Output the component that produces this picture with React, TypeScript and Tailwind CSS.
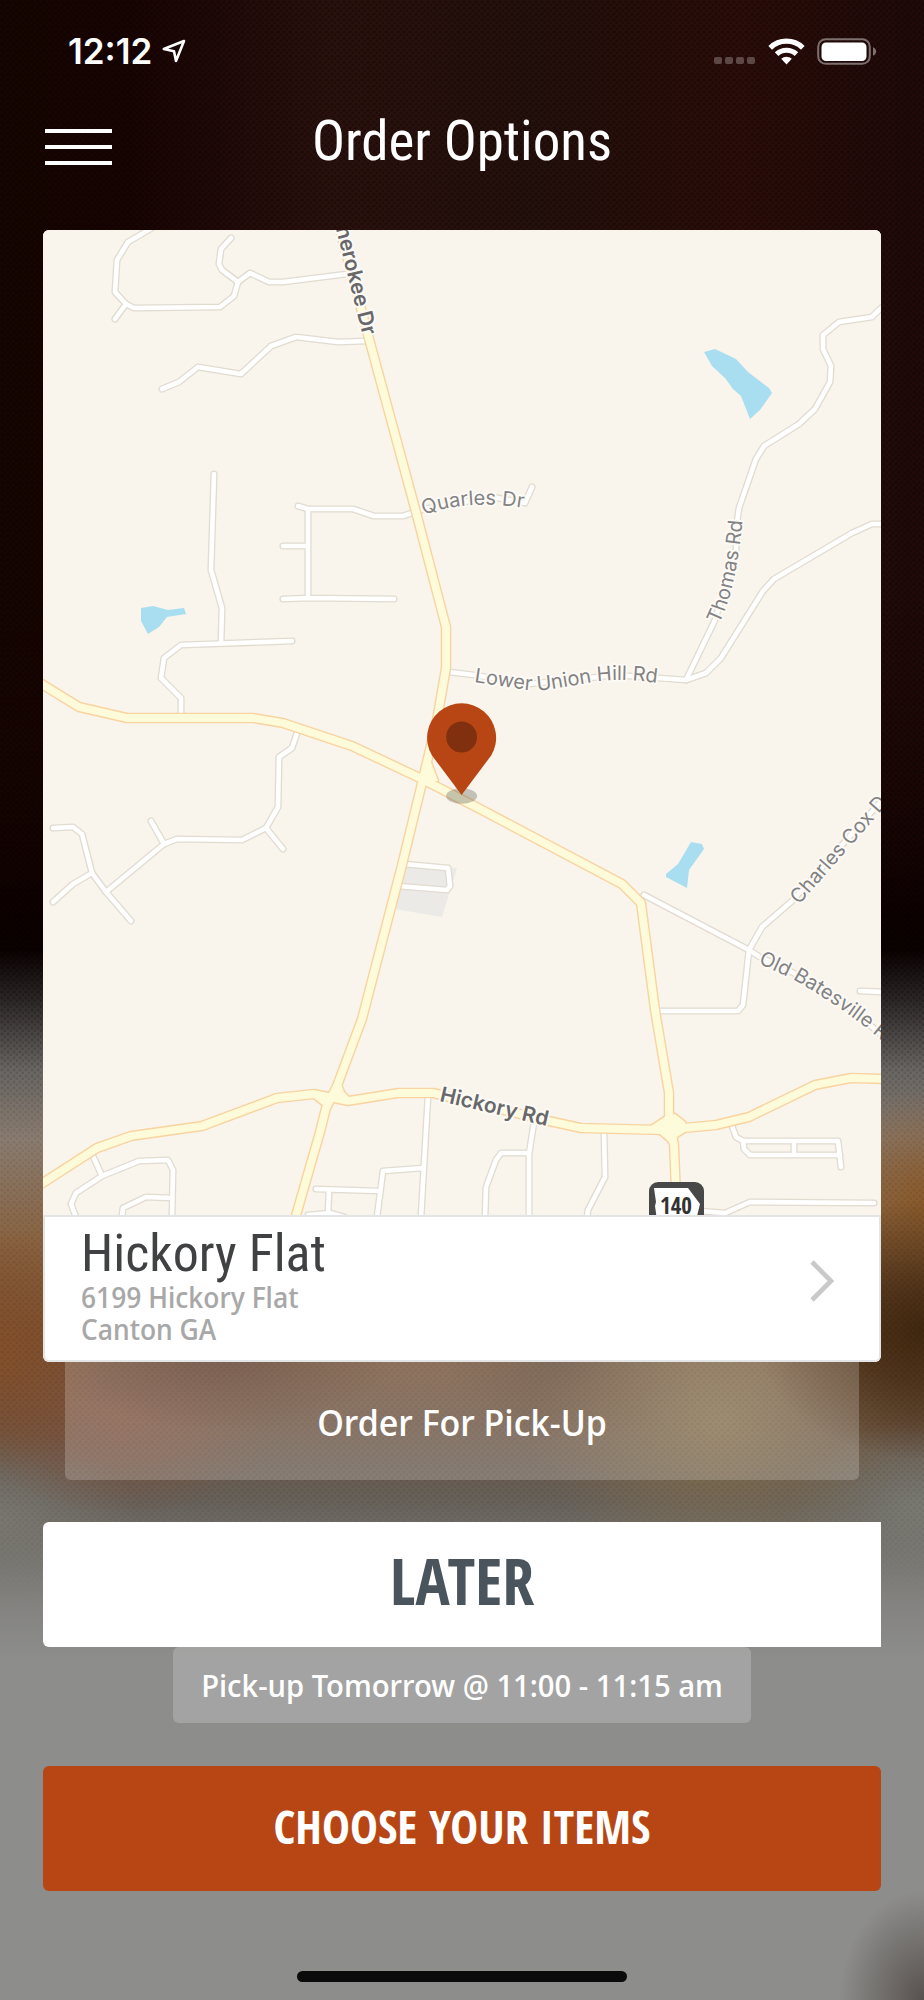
const TITLE_FONT = "font-['Roboto_Condensed','Noto_Sans',sans-serif]";
const LABEL_FONT = "font-['Noto_Sans_Display','Noto_Sans',sans-serif]";
const ACTION_FONT = "font-['Open_Sans_Condensed','Open_Sans',sans-serif]";

const STREETS = [
  'M152 228 128 242 117 260 115 292 126 304 134 308 220 307 234 296 238 282 250 273 269 282 283 282 347 274',
  'M126 304 115 319',
  'M231 238 221 249 219 264 222 270 238 282',
  'M162 389 179 382 198 367 241 374 271 346 296 337 338 342 367 341',
  'M298 506 308 509 353 509 374 516 403 516 424 509 492 497 525 503 532 487',
  'M308 509V598M283 546H308M283 599 308 598 394 599',
  'M214 474 211 570 222 608 221 643',
  'M292 641 181 645 164 658 161 678 181 698V718',
  'M881 308 872 317 839 322 823 335V349L831 366 830 382 815 409 799 424 764 446 756 459 739 508 737 522 736 550 715 620 686 680',
  'M449 672 474 675 529 684 589 678 615 675 686 680 706 673 721 658 763 591 774 579 852 533 872 524H884',
  'M297 733 292 748 279 757 278 807 266 828 242 840 177 839 164 844 106 892',
  'M266 828 283 849M151 821 164 844',
  'M53 828 73 827 82 834 92 873 106 892 131 921',
  'M92 873 73 884 53 902',
  'M404 864 448 868 450 886 447 890 398 886',
  'M92 1154 102 1176',
  'M76 1217 71 1204 76 1193 102 1176 139 1161 168 1160 173 1170 172 1217',
  'M122 1217 123 1208 146 1197 172 1198',
  'M428 1096 421 1217M423 1168 383 1171 377 1217',
  'M316 1189 379 1191M329 1190 328 1215M308 1215 330 1213 344 1217',
  'M644 895 749 950 760 957 800 976 840 1000 884 1037',
  'M884 798 792 901 762 927 749 950 743 1005 738 1011H658',
  'M860 991 884 992',
  'M534 1122 529 1154V1217M529 1153H501L496 1160 486 1187 485 1217',
  'M604 1130 605 1177 588 1210 587 1217',
  'M731 1123 736 1137 743 1141H838L841 1167M743 1141 744 1149 750 1155H840M794 1141V1155',
  'M700 1211 725 1213 750 1202 874 1203',
];

const HIGHWAYS = [
  'M339 226 368 335 416 512 446 627V668L437 720 427 762 422 783 402 865 362 1019 337 1086 326 1108 320 1132 295 1219',
  'M40 683 79 707 127 718H253L283 723 352 746 422 779 482 810 622 884 641 903 655 1010 669 1093V1127L674 1144 677 1219',
  'M38 1186 97 1148 131 1136 202 1126 277 1098 314 1094 348 1101 398 1093H433L549 1121 581 1128 662 1130 716 1125 749 1117 815 1085 851 1078 886 1079',
];

const JUNCTIONS =
  'M429 757 438 781 424 782ZM310 1095 324 1106 326 1116 334 1100ZM341 1084 344 1092 350 1098 334 1097ZM648 1128 666 1116 675 1114 685 1122 688 1130 677 1137 675 1150 667 1140 660 1134Z';

const PONDS = [
  'M141 608 153 606 168 610 184 608 186 614 167 617 159 627 148 634 141 621Z',
  'M704 352 715 349 736 359 748 372 769 388 772 393 760 410 750 419 741 396 733 389 725 378 712 366Z',
  'M691 842 702 844 704 849 689 870 687 888 666 877V874L678 864Z',
];

const LABELS = [
  { id: 'quarles', text: 'Quarles Dr', d: 'M424 515Q470 498 530 509', major: false },
  { id: 'union', text: 'Lower Union Hill Rd', d: 'M474 682 520 689Q537 692 552 689L600 681Q625 678 665 684', major: false },
  { id: 'thomas', text: 'Thomas Rd', d: 'M719 624Q737 588 743 515', major: false },
  { id: 'charles', text: 'Charles Cox Dr', d: 'M799 905 904 785', major: false },
  { id: 'batesville', text: 'Old Batesville Rd', d: 'M758 963 794 980Q830 1000 864 1026L920 1072', major: false },
  { id: 'hickory', text: 'Hickory Rd', d: 'M439 1101 560 1129', major: true },
  { id: 'cherokee', text: 'Cherokee Dr', d: 'M332 213 365 345', major: true },
];

function StatusBar() {
  return (
    <div className="flex h-[102px] items-center justify-between pr-[47px] pl-[68px] text-white">
      <div className="flex items-center gap-2.5">
        <span className="font-['Inter',sans-serif] text-[35px] leading-10 font-semibold">12:12</span>
        <svg className="size-6" viewBox="0 0 24 24" fill="none" stroke="currentColor" strokeWidth="2.6" strokeLinejoin="round" aria-hidden="true">
          <path d="M22 2 1.8 10 12 12.2 14 22Z" />
        </svg>
      </div>
      <div className="flex items-center gap-3">
        <svg className="h-[27px] w-[42px]" viewBox="0 0 42 27" aria-hidden="true">
          <g fill="#fff" fillOpacity=".25">
            <rect x="0" y="19" width="8" height="7" rx="2" />
            <rect x="11" y="19" width="8" height="7" rx="2" />
            <rect x="22" y="19" width="8" height="7" rx="2" />
            <rect x="33" y="19" width="8" height="7" rx="2" />
          </g>
        </svg>
        <svg className="h-[27px] w-[37px]" viewBox="0 0 37 27" aria-hidden="true">
          <g fill="none" stroke="#fff" strokeWidth="5.2">
            <path d="M2.2 9.8a23.4 23.4 0 0 1 32.6 0" />
            <path d="M8.6 16.2a14.4 14.4 0 0 1 19.8 0" />
          </g>
          <path d="M13.2 20.8a7.6 7.6 0 0 1 10.6 0L18.5 26.6Z" fill="#fff" />
        </svg>
        <svg className="h-[27px] w-[60px]" viewBox="0 0 60 27" aria-hidden="true">
          <rect x="1.2" y="1.2" width="51.6" height="24.6" rx="7.5" fill="none" stroke="#fff" strokeOpacity=".42" strokeWidth="2" />
          <rect x="4.5" y="4.5" width="45" height="18.5" rx="4.5" fill="#fff" />
          <path d="M56 9.2c4.2 1.6 4.2 7 0 8.6Z" fill="#fff" fillOpacity=".42" />
        </svg>
      </div>
    </div>
  );
}

function Header() {
  return (
    <header className="grid h-32 grid-cols-[67px_1fr_67px] px-[45px]">
      <button type="button" aria-label="Open menu" className="flex h-[90px] flex-col justify-center gap-3">
        <span className="block h-1 w-full bg-white" />
        <span className="block h-1 w-full bg-white" />
        <span className="block h-1 w-full bg-white" />
      </button>
      <h1 className={`text-center text-[55px] leading-[78px] text-white ${TITLE_FONT}`}>Order Options</h1>
    </header>
  );
}

function StoreMap() {
  return (
    <svg className="block aspect-[838/985] w-full bg-[#f9f5ec]" viewBox="43 230 838 985" role="img" aria-label="Map of the store location">
      <path d="M405 865 457 868 442 917 395 909Z" fill="#ebeae6" />
      <g fill="#a9def1">
        {PONDS.map((d) => (
          <path key={d} d={d} />
        ))}
      </g>
      <g fill="none" strokeLinecap="round" strokeLinejoin="round">
        {STREETS.map((d) => (
          <path key={d} d={d} stroke="#e1dbd0" strokeWidth="7.2" />
        ))}
        {STREETS.map((d) => (
          <path key={d} d={d} stroke="#fff" strokeWidth="4.6" />
        ))}
        {HIGHWAYS.map((d) => (
          <path key={d} d={d} stroke="#f9d3a0" strokeWidth="10.6" />
        ))}
        <path d={JUNCTIONS} stroke="#f9d3a0" strokeWidth="3" />
        {HIGHWAYS.map((d) => (
          <path key={d} d={d} stroke="#fdfbda" strokeWidth="7.8" />
        ))}
      </g>
      <path d={JUNCTIONS} fill="#fdfbda" />
      <g stroke="#fdfaf5" strokeWidth="4" strokeLinejoin="round" paintOrder="stroke" className="font-['Inter',sans-serif]">
        {LABELS.map((label) => (
          <g key={label.id}>
            <path id={label.id} d={label.d} fill="none" stroke="none" />
            <text fontSize={label.major ? 21 : 20} fontWeight={label.major ? 600 : 400} fill={label.major ? '#68686a' : '#828284'}>
              <textPath href={`#${label.id}`}>{label.text}</textPath>
            </text>
          </g>
        ))}
      </g>
      <rect x="649" y="1182" width="55" height="50" rx="9" fill="#484848" />
      <path d="M654 1188H688L700 1204 696 1220H657L655 1206 656 1202Z" fill="#fff" />
      <text x="676" y="1214" textAnchor="middle" fontSize="23" fontWeight="700" fill="#333" className="font-['Open_Sans_Condensed','Open_Sans',sans-serif]">
        140
      </text>
      <ellipse cx="461.6" cy="796" rx="15.5" ry="7.7" fill="#4a4a40" fillOpacity=".3" />
      <path d="M461.6 795 432 755.5A34.5 34.5 0 1 1 491.2 755.5Z" fill="#b84614" />
      <circle cx="461.6" cy="737" r="15.4" fill="#80300e" />
    </svg>
  );
}

function StoreCard() {
  return (
    <section className="overflow-hidden rounded-md bg-white">
      <StoreMap />
      <a href="#store" className="flex h-[147px] items-center justify-between rounded-b-md border-2 border-[#e3e4e5] bg-white pr-11 pb-4 pl-9">
        <div className="pt-2.5">
          <h2 className={`text-[52px] leading-[54px] text-[#404142] ${TITLE_FONT}`}>Hickory Flat</h2>
          <p className={`text-[28px] leading-8 font-medium text-[#a8a8a8] ${LABEL_FONT}`}>
            6199 Hickory Flat
            <br />
            Canton GA
          </p>
        </div>
        <svg className="h-11 w-7" viewBox="0 0 28 44" fill="none" stroke="#c9c9c9" strokeWidth="4.6" aria-hidden="true">
          <path d="M5 3 24 22 5 41" />
        </svg>
      </a>
    </section>
  );
}

export default function App() {
  return (
    <div className="relative isolate flex min-h-screen flex-col overflow-hidden bg-[linear-gradient(180deg,#220c0a_0%,#200907_25%,#150403_40%,#0b0101_47.5%,#2c2727_50%,#696663_53.5%,#8a7c70_57%,#8a6442_62%,#775032_67%,#6c5340_71%,#67615a_75%,#7f7e7b_79%,#8d8d8c_83%,#8d8d8b_100%)]">
      <div className="absolute inset-0 -z-10 bg-[linear-gradient(90deg,#160500_0%,#180403_14%,#2a110e_36%,#24100c_58%,#2b0d0a_80%,#1f0a08_100%)] [mask-image:linear-gradient(180deg,#000_0%,#000_30%,transparent_46%)]" />
      <div className="absolute inset-0 -z-10 bg-[radial-gradient(110px_120px_at_0_1350px,#84502b_0%,transparent_100%),radial-gradient(170px_130px_at_100%_1330px,#40270f_0%,#40270fb0_40%,transparent_100%),radial-gradient(110px_110px_at_100%_1205px,#8a5a2b_0%,transparent_100%),radial-gradient(190px_150px_at_720px_1420px,#87714f_0%,#87714f80_45%,transparent_100%),radial-gradient(180px_80px_at_220px_1350px,#5a3826_0%,transparent_100%),radial-gradient(130px_80px_at_570px_1360px,#5e4530_0%,transparent_100%),radial-gradient(160px_100px_at_120px_1415px,#805440_0%,transparent_100%),radial-gradient(140px_90px_at_0_1520px,#797770_0%,transparent_100%),radial-gradient(140px_90px_at_100%_1510px,#7a7a73_0%,transparent_100%),radial-gradient(85px_110px_at_100%_100%,#57514e_0%,transparent_100%)]" />
      <div className="absolute inset-0 -z-10 bg-[radial-gradient(circle_at_2px_2px,#00000040_1px,transparent_2px),radial-gradient(circle_at_5px_5px,#00000040_1px,transparent_2px)] bg-[length:6px_6px] [mask-image:linear-gradient(180deg,#000_0%,#000_48%,#0004_56%,#0004_74%,transparent_80%)]" />
      <StatusBar />
      <Header />
      <main className="flex flex-col px-[43px]">
        <StoreCard />
        <button type="button" className={`mx-[22px] h-[118px] rounded-b-md bg-white/20 pt-1 text-[36px] font-medium text-white ${LABEL_FONT}`}>
          Order For Pick-Up
        </button>
        <button type="button" className={`mt-[42px] h-[125px] rounded-l-md bg-white pb-2 text-[64px] leading-none font-bold text-[#4a545c] ${ACTION_FONT}`}>
          LATER
        </button>
        <p className={`flex h-[76px] items-center self-center rounded-md bg-white/20 px-7 text-[31px] font-medium text-white ${LABEL_FONT}`}>
          Pick-up Tomorrow @ 11:00 - 11:15 am
        </p>
        <button type="button" className={`mt-[43px] h-[125px] rounded-md bg-[#b84614] pb-1 text-[47px] leading-none font-bold text-white ${ACTION_FONT}`}>
          CHOOSE YOUR ITEMS
        </button>
      </main>
      <div className="mt-auto mb-[18px] h-[11px] w-[330px] self-center rounded-full bg-[#0b0b0b]" />
    </div>
  );
}
